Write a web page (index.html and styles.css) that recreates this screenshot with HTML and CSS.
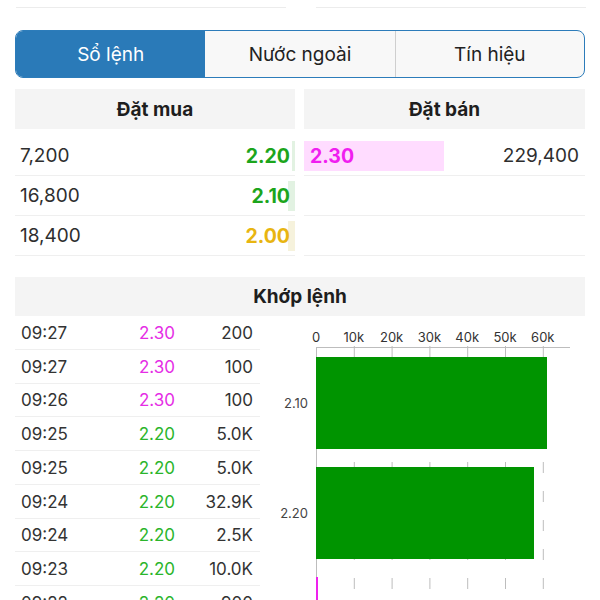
FILE: index.html
```html
<!DOCTYPE html>
<html lang="vi">
<head>
<meta charset="utf-8">
<link rel="stylesheet" href="styles.css">
</head>
<body>
<div class="top"><div></div><div></div></div>

<div class="seg">
  <div class="seg-item active">Sổ lệnh</div>
  <div class="seg-item">Nước ngoài</div>
  <div class="seg-item">Tín hiệu</div>
</div>

<div class="book">
  <div class="side">
    <div class="book-head">Đặt mua</div>
    <div class="book-row buy"><span class="bar bar-buy" style="width:3px"></span><span class="vol">7,200</span><span class="price green">2.20</span></div>
    <div class="book-row buy"><span class="bar bar-buy" style="width:7px"></span><span class="vol">16,800</span><span class="price green">2.10</span></div>
    <div class="book-row buy"><span class="bar bar-ref" style="width:7px"></span><span class="vol">18,400</span><span class="price gold">2.00</span></div>
  </div>
  <div class="side">
    <div class="book-head">Đặt bán</div>
    <div class="book-row sell"><span class="bar bar-sell" style="width:140px"></span><span class="price magenta">2.30</span><span class="vol">229,400</span></div>
    <div class="book-row sell"></div>
    <div class="book-row sell"></div>
  </div>
</div>

<div class="match-head">Khớp lệnh</div>

<div class="match">
  <div class="trades">
    <div class="trade"><span>09:27</span><span class="tp m">2.30</span><span class="tv">200</span></div>
    <div class="trade"><span>09:27</span><span class="tp m">2.30</span><span class="tv">100</span></div>
    <div class="trade"><span>09:26</span><span class="tp m">2.30</span><span class="tv">100</span></div>
    <div class="trade"><span>09:25</span><span class="tp g">2.20</span><span class="tv">5.0K</span></div>
    <div class="trade"><span>09:25</span><span class="tp g">2.20</span><span class="tv">5.0K</span></div>
    <div class="trade"><span>09:24</span><span class="tp g">2.20</span><span class="tv">32.9K</span></div>
    <div class="trade"><span>09:24</span><span class="tp g">2.20</span><span class="tv">2.5K</span></div>
    <div class="trade"><span>09:23</span><span class="tp g">2.20</span><span class="tv">10.0K</span></div>
    <div class="trade"><span>09:22</span><span class="tp g">2.20</span><span class="tv">900</span></div>
  </div>
  <svg class="chart" width="340" height="284" viewBox="0 0 340 284">
    <g class="ax-labels">
      <text x="56" y="26">0</text>
      <text x="93.8" y="26">10k</text>
      <text x="131.6" y="26">20k</text>
      <text x="169.4" y="26">30k</text>
      <text x="207.2" y="26">40k</text>
      <text x="245" y="26">50k</text>
      <text x="282.8" y="26">60k</text>
    </g>
    <line class="axis" x1="56" y1="31.5" x2="310" y2="31.5"/>
    <g class="grid">
      <line x1="94.3" y1="30" x2="94.3" y2="284"/>
      <line x1="132.1" y1="30" x2="132.1" y2="284"/>
      <line x1="169.9" y1="30" x2="169.9" y2="284"/>
      <line x1="207.7" y1="30" x2="207.7" y2="284"/>
      <line x1="245.5" y1="30" x2="245.5" y2="284"/>
      <line x1="283.3" y1="30" x2="283.3" y2="284"/>
    </g>
    <line class="axis" x1="56.5" y1="31" x2="56.5" y2="284"/>
    <rect class="bar-g" x="56" y="41" width="231" height="92"/>
    <rect class="bar-g" x="56" y="151" width="218" height="92"/>
    <rect class="bar-m" x="56" y="261" width="2" height="30"/>
    <text class="y-label" x="48" y="92">2.10</text>
    <text class="y-label" x="48" y="202">2.20</text>
  </svg>
</div>
</body>
</html>
```

FILE: styles.css
```css
html, body {
  margin: 0;
  padding: 0;
  background: #fff;
}
body {
  width: 600px;
  height: 600px;
  overflow: hidden;
  font-family: Inter, "Noto Sans", "Liberation Sans", sans-serif;
  color: #2b2b2b;
}

.top {
  display: flex;
  gap: 30px;
  padding: 0 14px 0 16px;
  height: 8px;
}
.top > div {
  flex: 1;
  border-bottom: 1px solid #ececec;
}

.seg {
  margin: 22px 15px 0;
  height: 48px;
  box-sizing: border-box;
  border: 1.5px solid #2c7cba;
  border-radius: 8px;
  overflow: hidden;
  display: grid;
  grid-template-columns: 1fr 1fr 1fr;
  background: #f8f8f8;
}
.seg-item {
  display: flex;
  align-items: center;
  justify-content: center;
  font-size: 19px;
  color: #222;
  border-left: 1px solid #cfcfcf;
}
.seg-item:first-child {
  border-left: none;
}
.seg-item.active {
  background: #2a7ab8;
  color: #fff;
}
.seg-item.active + .seg-item {
  border-left: none;
}

.book {
  margin: 11px 15px 0;
  display: grid;
  grid-template-columns: 280px 281px;
  column-gap: 9px;
}
.book-head {
  height: 40px;
  background: #f4f4f4;
  display: flex;
  align-items: center;
  justify-content: center;
  font-size: 19px;
  font-weight: 700;
  color: #1e1e1e;
  margin-bottom: 7px;
}
.book-row {
  position: relative;
  height: 40px;
  box-sizing: border-box;
  border-bottom: 1px solid #efefef;
  display: flex;
  align-items: center;
  justify-content: space-between;
  font-size: 19px;
}
.book-row.buy {
  padding: 0 5px 0 5px;
}
.book-row.sell {
  padding: 0 6px 0 6px;
}
.book-row .vol,
.book-row .price {
  position: relative;
}
.vol {
  color: #2e2e2e;
}
.price {
  font-weight: 700;
  font-size: 19.5px;
}
.green { color: #1ca51c; }
.gold { color: #e8b511; }
.magenta { color: #f01ef0; }

.bar {
  position: absolute;
  top: 5px;
  height: 30px;
}
.bar-buy { right: 0; background: #e2f2e2; }
.bar-ref { right: 0; background: #f6f2dc; }
.bar-sell { left: 0; background: #ffdcff; }

.match-head {
  margin: 21px 15px 0;
  height: 39px;
  background: #f4f4f4;
  display: flex;
  align-items: center;
  justify-content: center;
  font-size: 19px;
  font-weight: 700;
  color: #1e1e1e;
}

.match {
  display: flex;
  padding-left: 15px;
}
.trades {
  width: 245px;
  flex: none;
}
.trade {
  height: 33.75px;
  box-sizing: border-box;
  border-bottom: 1px solid #efefef;
  display: grid;
  grid-template-columns: 94px 60px 1fr;
  align-items: center;
  padding: 1px 7px 0 6px;
  font-size: 17px;
  color: #333;
}
.tp, .tv {
  text-align: right;
}
.tp.m { color: #e52ee5; }
.tp.g { color: #2bb52b; }

.chart {
  display: block;
  flex: none;
}
.ax-labels text {
  font-family: Inter, "Noto Sans", sans-serif;
  font-size: 13px;
  fill: #333;
  text-anchor: middle;
}
.axis {
  stroke: #bdbdbd;
  stroke-width: 1;
}
.grid line {
  stroke: #bdbdbd;
  stroke-width: 1;
  stroke-dasharray: 11 18;
}
.bar-g { fill: #009400; }
.bar-m { fill: #ee22ee; }
.y-label {
  font-family: Inter, "Noto Sans", sans-serif;
  font-size: 13px;
  fill: #444;
  text-anchor: end;
}
```
